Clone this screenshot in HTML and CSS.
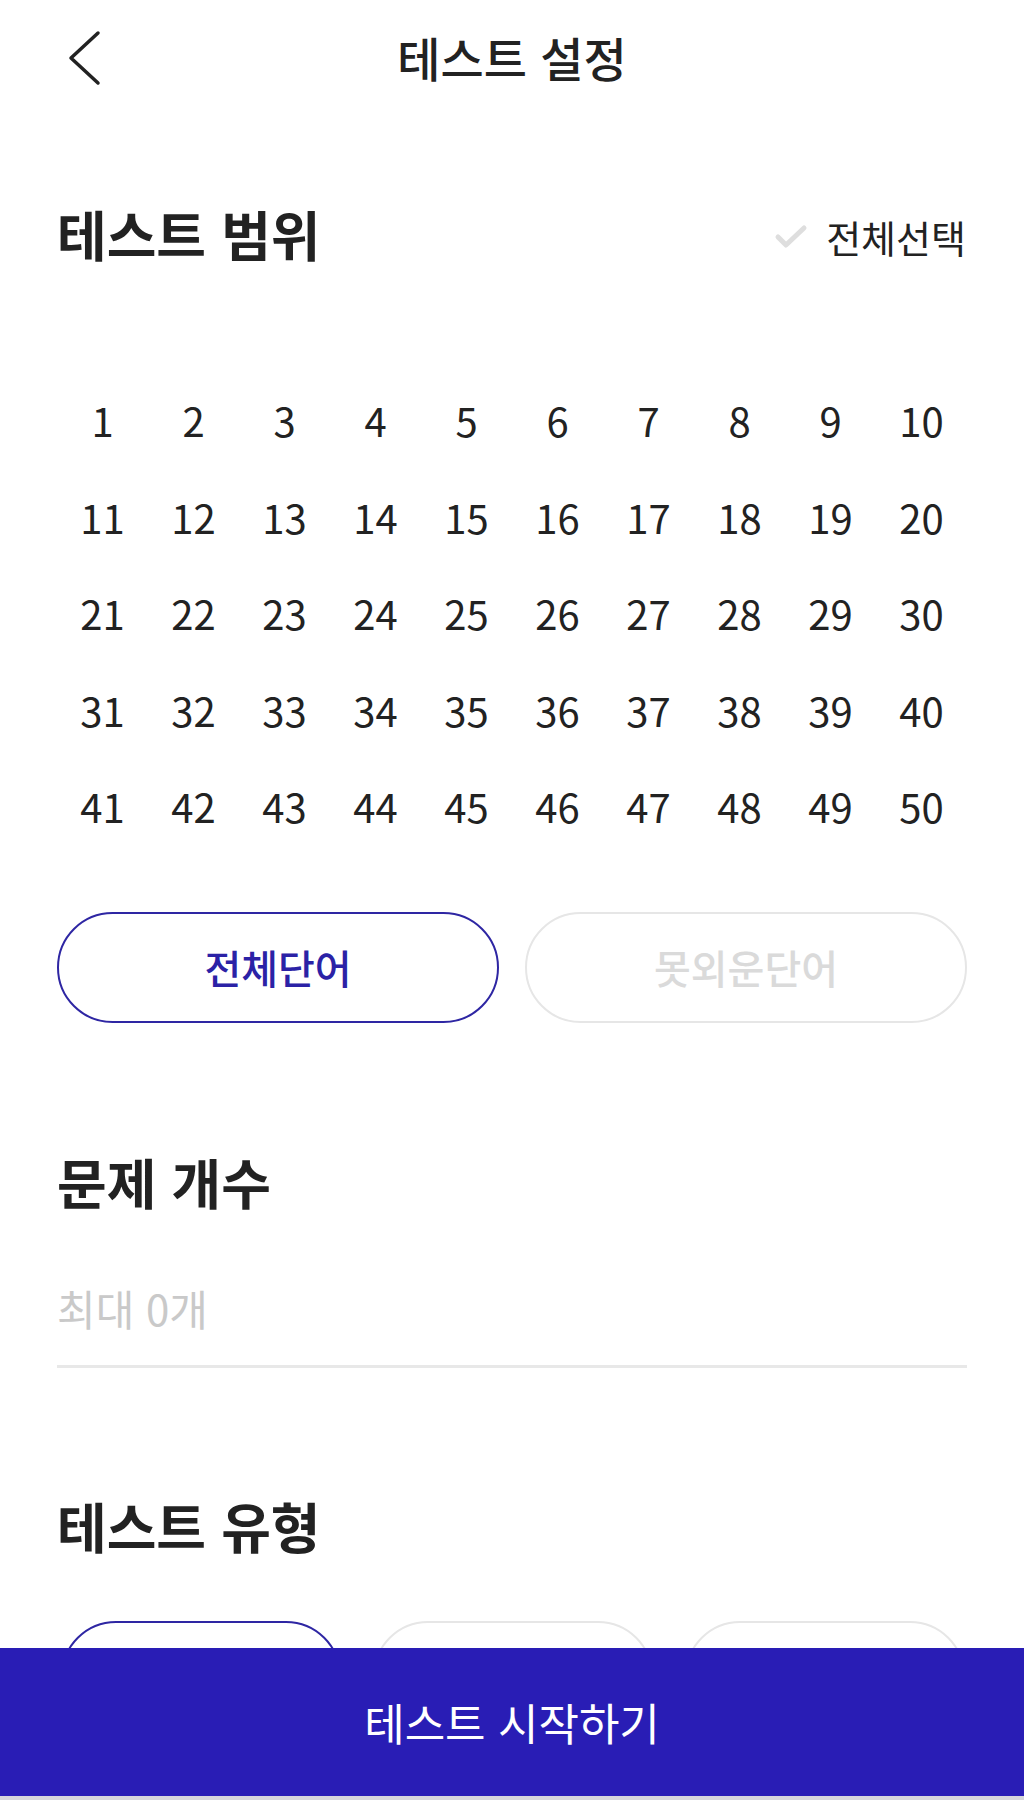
FILE: index.html
```html
<!DOCTYPE html>
<html lang="ko">
<head>
    <meta charset="UTF-8">
    <meta name="viewport" content="width=device-width, initial-scale=1.0">
    <title>테스트 설정</title>
    <link rel="stylesheet" href="styles.css">
</head>
<body>
<div class="page">
    <div class="header">
        <button class="back">
            <svg width="44" height="60" viewBox="0 0 44 60">
                <path d="M37 3 L10 28 L37 53" fill="none" stroke="#222" stroke-width="3.5" stroke-linecap="round" stroke-linejoin="round"/>
            </svg>
        </button>
        <h1 class="title">테스트 설정</h1>
        <div></div>
    </div>

    <div class="section-head range-head">
        <h2>테스트 범위</h2>
        <div class="select-all">
            <svg width="34" height="26" viewBox="0 0 34 26">
                <path d="M4 13 L12 21 L30 4" fill="none" stroke="#dedede" stroke-width="5" stroke-linecap="round" stroke-linejoin="round"/>
            </svg>
            <span>전체선택</span>
        </div>
    </div>

    <div class="days" id="days"></div>

    <div class="pills">
        <button class="pill on">전체단어</button>
        <button class="pill">못외운단어</button>
    </div>

    <div class="section-head count-head">
        <h2>문제 개수</h2>
    </div>
    <div class="count-field">
        <span class="placeholder">최대 0개</span>
    </div>

    <div class="section-head type-head">
        <h2>테스트 유형</h2>
    </div>
    <div class="types">
        <button class="type on"></button>
        <button class="type"></button>
        <button class="type"></button>
    </div>

    <button class="start">테스트 시작하기</button>
</div>

<script>
    // day numbers 1 ~ 50
    days = document.getElementById('days');
    let str = '';
    for (let i = 1; i <= 50; i++) {
        str += `<div class="day">${i}</div>`;
    }
    days.innerHTML = str;
</script>
</body>
</html>
```

FILE: styles.css
```css
*{
    margin: 0;
    padding: 0;
    box-sizing: border-box;
}

body{
    background: #fff;
    font-family: "Noto Sans CJK KR", "Noto Sans", sans-serif;
    color: #222;
}

button{
    font-family: inherit;
    background: none;
    border: none;
}

.page{
    position: relative;
    width: 1024px;
    height: 1800px;
    overflow: hidden;
}

.header{
    display: grid;
    grid-template-columns: 1fr auto 1fr;
    align-items: center;
    height: 120px;
}
.back{
    justify-self: start;
    margin-left: 61px;
    display: flex;
}
.title{
    font-size: 47px;
    font-weight: 500;
    line-height: 1;
    margin-bottom: 8px;
}

.section-head{
    display: flex;
    justify-content: space-between;
    align-items: center;
    height: 80px;
    padding: 0 58px 0 57px;
}
.section-head h2{
    font-size: 54px;
    font-weight: 700;
    line-height: 1;
    margin-bottom: 6px;
}
.range-head{
    margin-top: 77px;
}
.select-all{
    display: flex;
    align-items: center;
    gap: 18px;
    font-size: 38px;
    line-height: 1;
}

.days{
    display: grid;
    grid-template-columns: repeat(10, 1fr);
    grid-auto-rows: 96.5px;
    margin: 95px 57px 0 57px;
}
.day{
    display: flex;
    justify-content: center;
    align-items: center;
    font-size: 40px;
    line-height: 1;
}

.pills{
    display: flex;
    gap: 26px;
    margin: 57px 57px 0 57px;
}
.pill{
    flex: 1;
    height: 111px;
    border: 2.5px solid #e6e6e6;
    border-radius: 56px;
    font-size: 40px;
    font-weight: 500;
    color: #dadada;
}
.pill.on{
    border-color: #2e26a3;
    color: #2b22a6;
}

.count-head{
    margin-top: 122px;
}
.count-field{
    display: flex;
    align-items: center;
    height: 143px;
    margin: 0 57px;
    padding-top: 26px;
    border-bottom: 3px solid #e8e8e8;
}
.placeholder{
    font-size: 42px;
    color: #c9c9c9;
    line-height: 1;
}

.type-head{
    margin-top: 121px;
}
.types{
    display: flex;
    gap: 32px;
    margin: 52px 59px 0 61px;
}
.type{
    flex: 1;
    height: 110px;
    border: 2.5px solid #e6e6e6;
    border-radius: 56px;
}
.type.on{
    border-color: #2e26a3;
}

.start{
    position: absolute;
    left: 0;
    bottom: 0;
    width: 100%;
    height: 152px;
    background: #291db5;
    border-bottom: 4px solid #d6d6dc;
    color: #fff;
    font-size: 44px;
    font-weight: 400;
}
```
